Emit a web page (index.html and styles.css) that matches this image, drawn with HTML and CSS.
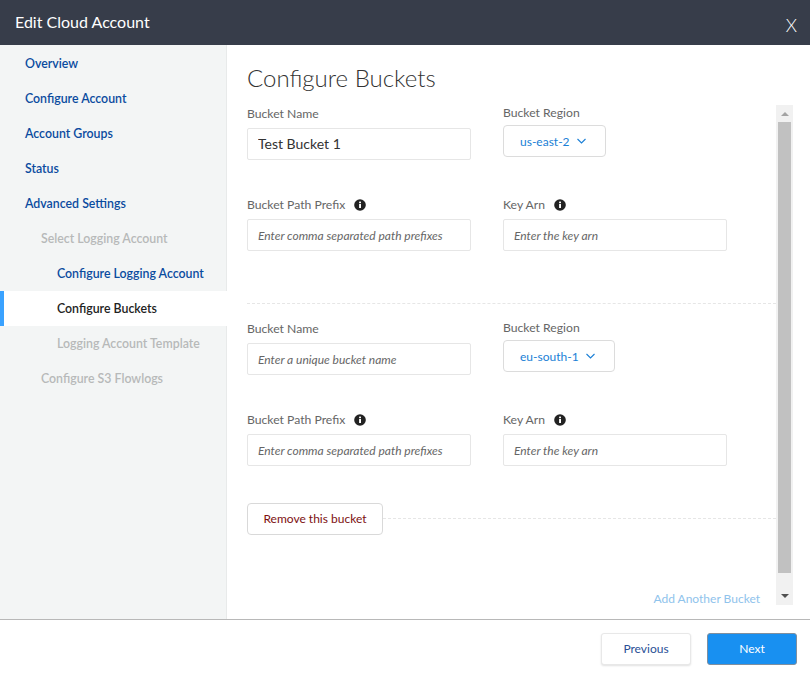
FILE: index.html
```html
<!DOCTYPE html>
<html lang="en">
<head>
<meta charset="utf-8">
<title>Edit Cloud Account</title>
<link rel="stylesheet" href="styles.css">
</head>
<body>
<div class="modal">
  <header class="modal-header">
    <span class="modal-title">Edit Cloud Account</span>
    <span class="modal-close">X</span>
  </header>
  <div class="modal-body">
    <nav class="sidebar">
      <a class="nav-item link">Overview</a>
      <a class="nav-item link">Configure Account</a>
      <a class="nav-item link">Account Groups</a>
      <a class="nav-item link">Status</a>
      <a class="nav-item link">Advanced Settings</a>
      <a class="nav-item level-1 disabled">Select Logging Account</a>
      <a class="nav-item level-2 link">Configure Logging Account</a>
      <a class="nav-item level-2 active">Configure Buckets</a>
      <a class="nav-item level-2 disabled">Logging Account Template</a>
      <a class="nav-item level-1 disabled">Configure S3 Flowlogs</a>
    </nav>
    <main class="content">
      <h1 class="page-title">Configure Buckets</h1>
      <div class="scroll-wrap">
        <div class="scroll-content">
          <section class="bucket">
            <div class="field">
              <label class="field-label">Bucket Name</label>
              <input class="text-input filled" type="text" value="Test Bucket 1">
            </div>
            <div class="field field-select">
              <label class="field-label">Bucket Region</label>
              <button class="select-btn" type="button">us-east-2
                <svg class="chevron" viewBox="0 0 9 6" width="9" height="6"><path d="M.5 1l4 4 4-4" fill="none" stroke="#1a7fd6" stroke-width="1.1"/></svg>
              </button>
            </div>
            <div class="field">
              <label class="field-label">Bucket Path Prefix
                <svg class="info" viewBox="0 0 12 12" width="12" height="12"><circle cx="6" cy="6" r="5.8" fill="#222"/><rect x="5.1" y="5" width="1.9" height="4" fill="#fff"/><rect x="5.1" y="2.6" width="1.9" height="1.6" fill="#fff"/></svg>
              </label>
              <input class="text-input" type="text" placeholder="Enter comma separated path prefixes">
            </div>
            <div class="field">
              <label class="field-label">Key Arn
                <svg class="info" viewBox="0 0 12 12" width="12" height="12"><circle cx="6" cy="6" r="5.8" fill="#222"/><rect x="5.1" y="5" width="1.9" height="4" fill="#fff"/><rect x="5.1" y="2.6" width="1.9" height="1.6" fill="#fff"/></svg>
              </label>
              <input class="text-input" type="text" placeholder="Enter the key arn">
            </div>
          </section>
          <hr class="divider">
          <section class="bucket">
            <div class="field">
              <label class="field-label">Bucket Name</label>
              <input class="text-input" type="text" placeholder="Enter a unique bucket name">
            </div>
            <div class="field field-select">
              <label class="field-label">Bucket Region</label>
              <button class="select-btn" type="button">eu-south-1
                <svg class="chevron" viewBox="0 0 9 6" width="9" height="6"><path d="M.5 1l4 4 4-4" fill="none" stroke="#1a7fd6" stroke-width="1.1"/></svg>
              </button>
            </div>
            <div class="field">
              <label class="field-label">Bucket Path Prefix
                <svg class="info" viewBox="0 0 12 12" width="12" height="12"><circle cx="6" cy="6" r="5.8" fill="#222"/><rect x="5.1" y="5" width="1.9" height="4" fill="#fff"/><rect x="5.1" y="2.6" width="1.9" height="1.6" fill="#fff"/></svg>
              </label>
              <input class="text-input" type="text" placeholder="Enter comma separated path prefixes">
            </div>
            <div class="field">
              <label class="field-label">Key Arn
                <svg class="info" viewBox="0 0 12 12" width="12" height="12"><circle cx="6" cy="6" r="5.8" fill="#222"/><rect x="5.1" y="5" width="1.9" height="4" fill="#fff"/><rect x="5.1" y="2.6" width="1.9" height="1.6" fill="#fff"/></svg>
              </label>
              <input class="text-input" type="text" placeholder="Enter the key arn">
            </div>
          </section>
          <div class="remove-row">
            <button class="remove-btn" type="button">Remove this bucket</button>
            <span class="remove-line"></span>
          </div>
          <a class="add-link">Add Another Bucket</a>
        </div>
        <div class="scrollbar">
          <div class="track-end track-top"><span class="arrow arrow-up"></span></div>
          <span class="thumb"></span>
          <div class="track-end track-bottom"><span class="arrow arrow-down"></span></div>
        </div>
      </div>
    </main>
  </div>
  <footer class="modal-footer">
    <button class="btn btn-secondary" type="button">Previous</button>
    <button class="btn btn-primary" type="button">Next</button>
  </footer>
</div>
</body>
</html>
```

FILE: styles.css
```css
* { box-sizing: border-box; }
html, body { margin: 0; padding: 0; height: 100%; }
body { font-family: Lato, "Open Sans", sans-serif; background: #fff; color: #333; overflow: hidden; }

.modal { width: 810px; height: 677px; display: flex; flex-direction: column; }

.modal-header {
  height: 45px; flex: none; background: #373d4a; color: #fff;
  display: flex; justify-content: space-between; padding: 0 13px 0 15px;
}
.modal-title { font-size: 16px; line-height: 43px; }
.modal-close { font-size: 18px; line-height: 51px; font-weight: 300; }

.modal-body { height: 574px; flex: none; display: flex; }

.sidebar {
  width: 227px; flex: none; background: #f3f5f5; border-right: 1px solid #e8eaea;
  padding-top: 1px; display: flex; flex-direction: column;
}
.nav-item {
  height: 35px; line-height: 36px; padding-left: 25px;
  font-size: 12.35px; font-weight: 600; white-space: nowrap;
}
.level-1 { padding-left: 41px; }
.level-2 { padding-left: 57px; }
.link { color: #0a4b9f; }
.disabled { color: #b7b9b9; }
.active {
  color: #222; background: #fff; border-left: 4px solid #3aa2ff;
  padding-left: 53px; margin-right: -1px;
}

.content { flex: 1; min-width: 0; padding: 0 17px 0 20px; display: flex; flex-direction: column; }
.page-title {
  margin: 0; height: 60px; padding-top: 17px;
  font-size: 24px; line-height: 32px; font-weight: 300; color: #333;
}

.scroll-wrap { height: 500px; display: flex; }
.scroll-content { flex: 1; min-width: 0; display: flex; flex-direction: column; }

.bucket { display: grid; grid-template-columns: 224px 224px; column-gap: 32px; row-gap: 36px; }
.field-label {
  display: flex; align-items: center; gap: 9px; height: 18px; margin-bottom: 5px;
  font-size: 12.2px; line-height: 18px; color: #666;
}
.field-select .field-label { height: 16px; margin-bottom: 4px; line-height: 16px; }
.info { flex: none; }

.text-input {
  display: block; width: 224px; height: 32px; padding: 0 10px;
  border: 1px solid #e6e6e6; border-radius: 2px; background: #fff; outline: none;
  font-family: inherit; font-size: 12px; color: #333;
}
.text-input::placeholder { font-style: italic; color: #666; opacity: 1; }
.text-input.filled { font-size: 14px; padding-bottom: 2px; }

.select-btn {
  display: inline-flex; align-items: center; gap: 7px; height: 32px; padding: 0 19px 0 16px;
  border: 1px solid #dcdcdc; border-radius: 4px; background: #fff;
  font-family: inherit; font-size: 12px; color: #1a7fd6;
}
.chevron { flex: none; }

.divider {
  margin: 52px 0 16px; height: 0; border: 0; border-top: 1px dashed #e6e6e6;
}

.remove-row { margin-top: 37px; display: flex; align-items: center; }
.remove-btn {
  flex: none; width: 136px; height: 32px; padding: 0 0 2px;
  border: 1px solid #d9d9d9; border-radius: 4px; background: #fff;
  font-family: inherit; font-size: 12px; color: #7d1010;
}
.remove-line { flex: 1; border-top: 1px dashed #e6e6e6; margin-bottom: 2px; }

.add-link {
  margin-top: auto; padding-right: 16px; text-align: right;
  font-size: 12px; line-height: 12px; color: #8fc3ec;
}

.scrollbar { width: 17px; flex: none; background: #f1f1f1; display: flex; flex-direction: column; align-items: center; }
.track-end { width: 100%; display: flex; justify-content: center; }
.track-top { height: 17px; align-items: center; }
.track-bottom { flex: 1; align-items: flex-end; padding-bottom: 7px; }
.thumb { width: 13px; height: 451px; flex: none; background: #c1c1c1; }
.arrow { width: 0; height: 0; border-left: 4px solid transparent; border-right: 4px solid transparent; }
.arrow-up { border-bottom: 4px solid #a3a3a3; }
.arrow-down { border-top: 4px solid #505050; }

.modal-footer {
  flex: 1; border-top: 1px solid #b8b8b8; display: flex; justify-content: flex-end;
  gap: 16px; padding: 13px 13px 0 0; background: #fff;
}
.btn {
  width: 90px; height: 32px; border-radius: 3px; padding: 0 0 2px;
  font-family: inherit; font-size: 12px; cursor: pointer;
}
.btn-secondary { background: #fff; border: 1px solid #e8e8e8; color: #2a4f96; box-shadow: 0 1px 2px rgba(0,0,0,.12); }
.btn-primary { background: #1890f1; border: 1px solid #7f8f9f; color: #fff; }
```
